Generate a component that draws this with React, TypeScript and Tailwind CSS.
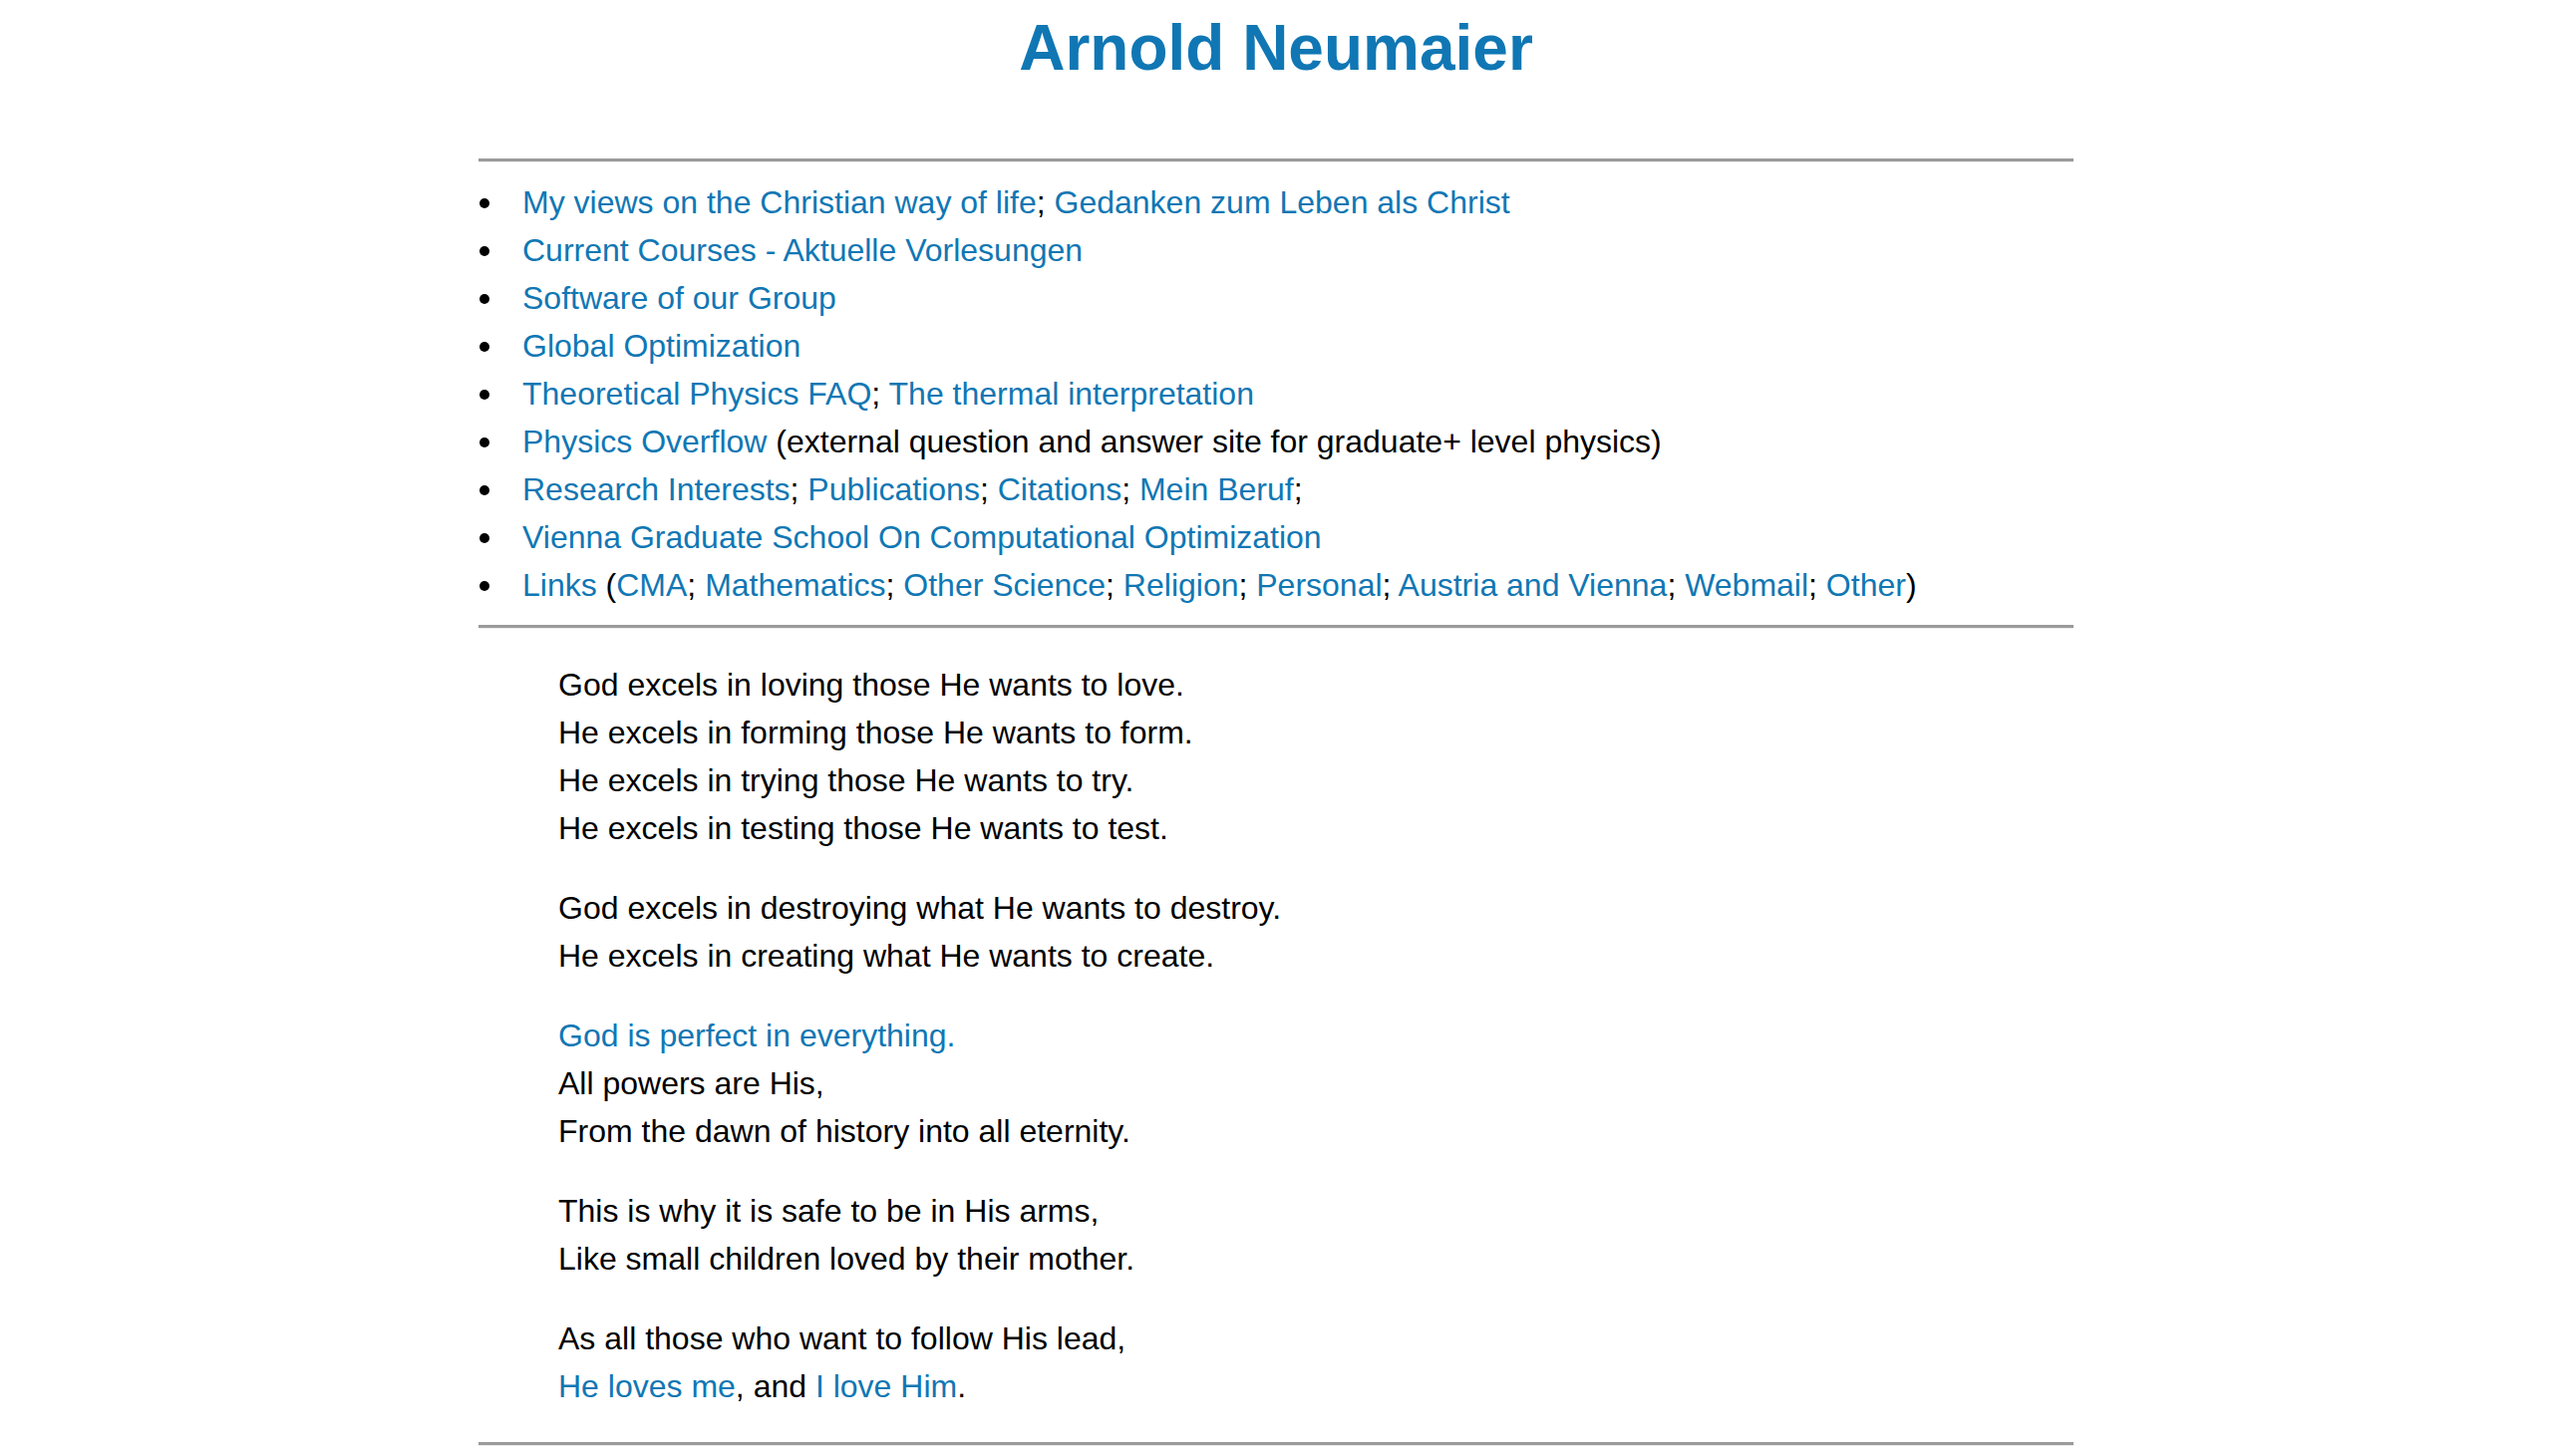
import React from "react";

const A = ({ children }: { children: React.ReactNode }) => (
  <a href="#" className="text-[#1077b4] no-underline">
    {children}
  </a>
);

const Hr = () => (
  <div className="h-[4px] border-t-[3px] border-t-[#9b9b9b] border-b border-b-[#ececec]" />
);

const Li = ({ children }: { children: React.ReactNode }) => (
  <li className="flex items-center h-[48px]">
    <span className="w-[10px] h-[10px] rounded-full bg-black ml-[1px] mr-[33px] mt-[1px] shrink-0" />
    <span>{children}</span>
  </li>
);

export default function App() {
  return (
    <div className="bg-white min-h-screen text-black text-[32px] leading-[48px] font-['Liberation_Sans',Arial,Helvetica,sans-serif]">
      <div className="mx-auto w-[1600px]">
        <h1 className="text-center text-[64px] leading-[96px] font-bold text-[#1077b4] mb-[63px]">
          Arnold Neumaier
        </h1>
        <Hr />
        <ul className="my-[16px]">
          <Li>
            <A>My views on the Christian way of life</A>; <A>Gedanken zum Leben als Christ</A>
          </Li>
          <Li>
            <A>Current Courses - Aktuelle Vorlesungen</A>
          </Li>
          <Li>
            <A>Software of our Group</A>
          </Li>
          <Li>
            <A>Global Optimization</A>
          </Li>
          <Li>
            <A>Theoretical Physics FAQ</A>; <A>The thermal interpretation</A>
          </Li>
          <Li>
            <A>Physics Overflow</A> (external question and answer site for graduate+ level physics)
          </Li>
          <Li>
            <A>Research Interests</A>; <A>Publications</A>; <A>Citations</A>; <A>Mein Beruf</A>;
          </Li>
          <Li>
            <A>Vienna Graduate School On Computational Optimization</A>
          </Li>
          <Li>
            <A>Links</A> (<A>CMA</A>; <A>Mathematics</A>; <A>Other Science</A>; <A>Religion</A>;{" "}
            <A>Personal</A>; <A>Austria and Vienna</A>; <A>Webmail</A>; <A>Other</A>)
          </Li>
        </ul>
        <Hr />
        <div className="pl-[80px] py-[32px] flex flex-col gap-[32px]">
          <p>
            God excels in loving those He wants to love.
            <br />
            He excels in forming those He wants to form.
            <br />
            He excels in trying those He wants to try.
            <br />
            He excels in testing those He wants to test.
          </p>
          <p>
            God excels in destroying what He wants to destroy.
            <br />
            He excels in creating what He wants to create.
          </p>
          <p>
            <A>God is perfect in everything.</A>
            <br />
            All powers are His,
            <br />
            From the dawn of history into all eternity.
          </p>
          <p>
            This is why it is safe to be in His arms,
            <br />
            Like small children loved by their mother.
          </p>
          <p>
            As all those who want to follow His lead,
            <br />
            <A>He loves me</A>, and <A>I love Him</A>.
          </p>
        </div>
        <Hr />
      </div>
    </div>
  );
}
